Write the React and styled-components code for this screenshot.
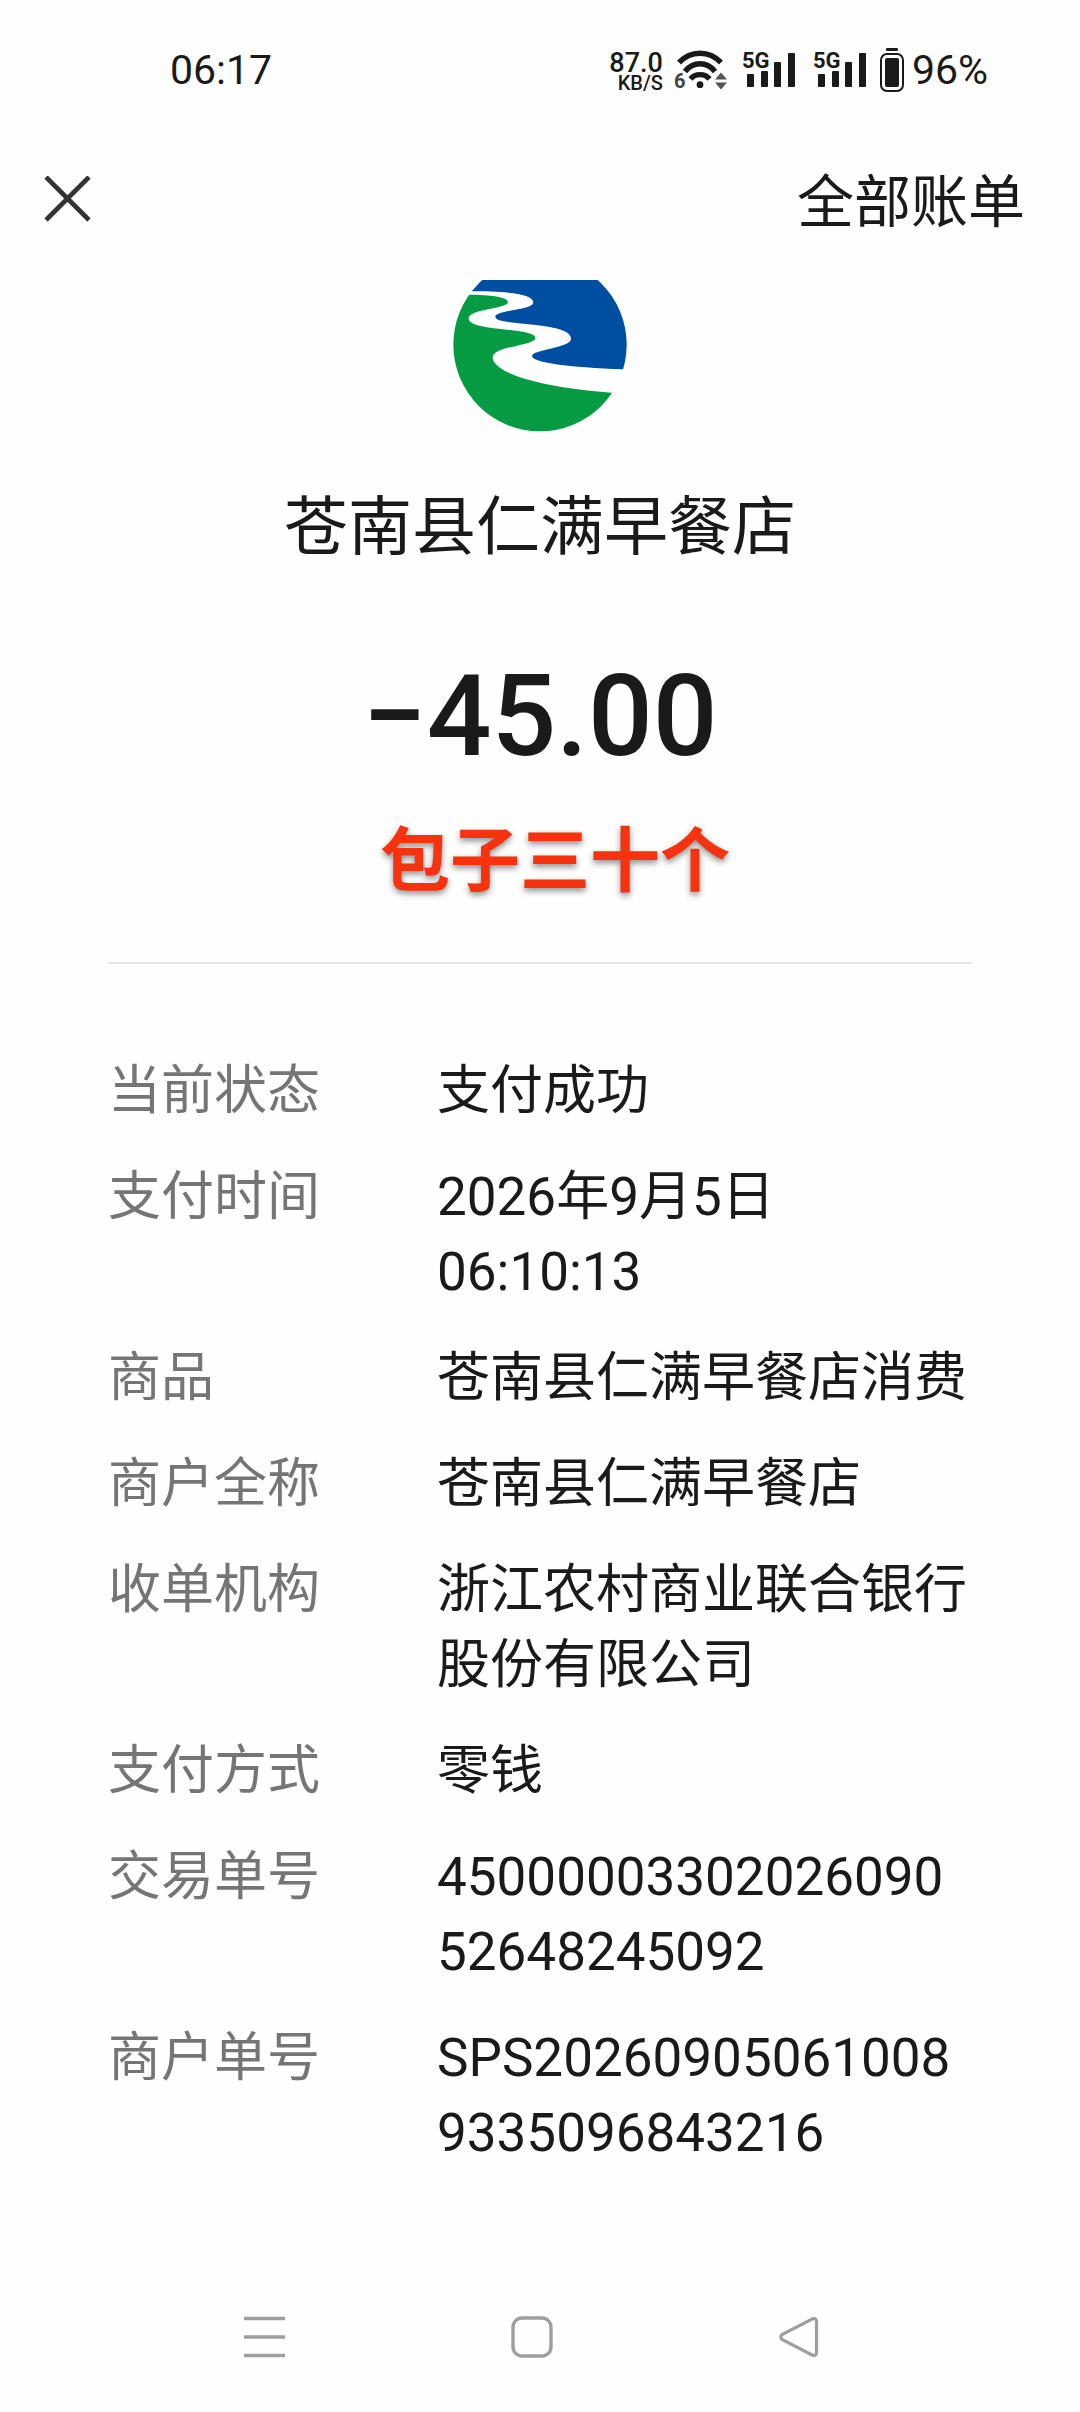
import styled, { createGlobalStyle } from "styled-components";

const GlobalStyle = createGlobalStyle`
  * {
    box-sizing: border-box;
  }
  body {
    margin: 0;
    background-color: #fefefe;
    color: #1a1a1a;
    font-family: Roboto, "Noto Sans CJK SC", sans-serif;
  }
`;

const Page = styled.div`
  display: flex;
  flex-direction: column;
  min-height: 100vh;
`;

const StatusBar = styled.div`
  display: flex;
  align-items: center;
  justify-content: space-between;
  height: 120px;
  padding: 20px 92px 0 170px;
  font-size: 41px;
  line-height: 48px;
`;

const StatusIcons = styled.div`
  display: flex;
  align-items: center;
  svg {
    display: block;
  }
`;

const Speed = styled.div`
  display: flex;
  flex-direction: column;
  align-items: flex-end;
  padding-top: 2px;
  margin-right: 8px;
  font-weight: 500;
  font-size: 27px;
  line-height: 24px;
  small {
    font-size: 20px;
    line-height: 16px;
  }
`;

const SignalIcon = styled.svg`
  margin-left: 14px;
`;

const BatteryIcon = styled.svg`
  margin: 0 8px 0 11px;
`;

const Header = styled.header`
  display: flex;
  align-items: center;
  justify-content: space-between;
  height: 160px;
  padding: 0 55px 0 44px;
`;

const IconButton = styled.button`
  display: flex;
  align-items: center;
  justify-content: center;
  padding: 0;
  border: 0;
  background: none;
  cursor: pointer;
`;

const AllBills = styled.a`
  padding-top: 5px;
  color: inherit;
  font-size: 57px;
  line-height: 76px;
  text-decoration: none;
`;

const Summary = styled.section`
  display: flex;
  flex-direction: column;
  align-items: center;
`;

const MerchantName = styled.h1`
  margin: 58px 0 0;
  font-weight: 400;
  font-size: 64px;
  line-height: 76px;
`;

const Amount = styled.div`
  margin-top: 82px;
  font-weight: 500;
  font-size: 114px;
  line-height: 136px;
`;

const Note = styled.div`
  margin-top: 34px;
  padding-left: 30px;
  color: #f7330f;
  font-weight: 700;
  font-size: 70px;
  line-height: 88px;
  text-shadow: 0 3px 6px rgba(0, 0, 0, 0.45);
`;

const Divider = styled.hr`
  width: calc(100% - 216px);
  height: 2px;
  margin: 56px 108px 0;
  border: 0;
  background-color: #e6e6e6;
`;

const Details = styled.dl`
  display: flex;
  flex-direction: column;
  gap: 31px;
  margin: 90px 108px 0;
  font-size: 53px;
  line-height: 75px;
`;

const Row = styled.div`
  display: grid;
  grid-template-columns: 329px 1fr;
`;

const Label = styled.dt`
  color: #757575;
`;

const Value = styled.dd`
  margin: 0;
  overflow-wrap: anywhere;
`;

const NavBar = styled.nav`
  display: grid;
  grid-template-columns: repeat(3, 1fr);
  height: 150px;
  margin-top: auto;
  padding: 0 148px 0 131px;
`;

const details = [
  ["当前状态", "支付成功"],
  ["支付时间", "2026年9月5日 06:10:13"],
  ["商品", "苍南县仁满早餐店消费"],
  ["商户全称", "苍南县仁满早餐店"],
  ["收单机构", "浙江农村商业联合银行股份有限公司"],
  ["支付方式", "零钱"],
  ["交易单号", "4500000330202609052648245092"],
  ["商户单号", "SPS202609050610089335096843216"],
];

function Wifi() {
  return (
    <svg width="56" height="46" viewBox="671 45 56 46" fill="none" stroke="#1a1a1a" strokeWidth="5.4">
      <path d="M679 60.5Q688 51.2 700 51.2T721 60.5" />
      <path d="M685 69.5Q691 61.8 700 61.8T715 69.5" />
      <path d="M690.5 77Q694 72.6 700 72.6T709.5 77" />
      <circle cx="700" cy="82.7" r="3.4" fill="#1a1a1a" stroke="none" />
      <path d="M721 70.5L727 77.5H715ZM715 80.5H727L721 87.5Z" fill="#555" stroke="none" />
      <text x="674" y="86" fill="#444" stroke="none" fontSize="20" fontWeight="700">6</text>
    </svg>
  );
}

function Signal() {
  return (
    <SignalIcon width="57" height="46" viewBox="740 45 57 46" fill="#1a1a1a">
      <rect x="746" y="72" width="7" height="13" rx="1" />
      <rect x="760" y="69" width="7" height="16" rx="1" />
      <rect x="773" y="60" width="7" height="25" rx="1" />
      <rect x="787" y="51" width="7" height="34" rx="1" />
      <text x="741" y="66" fontSize="22" fontWeight="700">5G</text>
    </SignalIcon>
  );
}

function Battery() {
  return (
    <BatteryIcon width="24" height="46" viewBox="0 0 24 46" fill="#1a1a1a">
      <rect x="6" y="1" width="12" height="3" rx="1" />
      <rect x="1" y="7" width="22" height="37" rx="6" fill="none" stroke="#1a1a1a" strokeWidth="2" />
      <rect x="5" y="11" width="14" height="29" rx="2" />
    </BatteryIcon>
  );
}

function Logo() {
  return (
    <svg width="174" height="152" viewBox="72 60 520 456">
      <clipPath id="disc">
        <circle cx="332" cy="254" r="260" />
      </clipPath>
      <g clipPath="url(#disc)">
        <path
          fill="#004ea1"
          d="M100 94H130C200 94 312 97 312 127C312 151 198 150 198 170C198 186 260 188 320 195C380 202 425 213 425 236C425 264 308 268 308 288C308 308 420 322 582 328H600V0H100Z"
        />
        <path
          fill="#049b43"
          d="M60 104H120C180 104 236 110 236 127C236 146 118 147 118 176C118 214 318 202 318 234C318 258 190 258 190 292C190 342 350 384 547 398L600 420V520H60Z"
        />
      </g>
    </svg>
  );
}

export default function App() {
  return (
    <Page>
      <GlobalStyle />
      <StatusBar>
        <span>06:17</span>
        <StatusIcons>
          <Speed>
            87.0
            <small>KB/S</small>
          </Speed>
          <Wifi />
          <Signal />
          <Signal />
          <Battery />
          <span>96%</span>
        </StatusIcons>
      </StatusBar>
      <Header>
        <IconButton aria-label="关闭">
          <svg width="47" height="48" viewBox="0 1 47 48" stroke="#333" strokeWidth="4.6">
            <path d="M2 2L45 45M45 2L2 45" />
          </svg>
        </IconButton>
        <AllBills href="#bills">全部账单</AllBills>
      </Header>
      <main>
        <Summary>
          <Logo />
          <MerchantName>苍南县仁满早餐店</MerchantName>
          <Amount>−45.00</Amount>
          <Note>包子三十个</Note>
        </Summary>
        <Divider />
        <Details>
          {details.map(([label, value]) => (
            <Row key={label}>
              <Label>{label}</Label>
              <Value>{value}</Value>
            </Row>
          ))}
        </Details>
      </main>
      <NavBar>
        <IconButton aria-label="最近任务">
          <svg width="42" height="42" viewBox="0 0 42 42" stroke="#9e9e9e" strokeWidth="3.6">
            <path d="M0 2.5H41M0 21H41M0 39.5H41" />
          </svg>
        </IconButton>
        <IconButton aria-label="主屏幕">
          <svg width="42" height="42" viewBox="0 0 42 42" fill="none" stroke="#9e9e9e" strokeWidth="3.4">
            <rect x="2" y="2" width="38" height="38" rx="9" />
          </svg>
        </IconButton>
        <IconButton aria-label="返回">
          <svg width="42" height="42" viewBox="0 0 42 42" fill="none" stroke="#9e9e9e" strokeWidth="3.2">
            <path d="M34.5 2.8L4 18.6Q1.6 21 4 23.4L34.5 39.2Q38.5 40.4 38.5 36V6Q38.5 1.6 34.5 2.8Z" />
          </svg>
        </IconButton>
      </NavBar>
    </Page>
  );
}
